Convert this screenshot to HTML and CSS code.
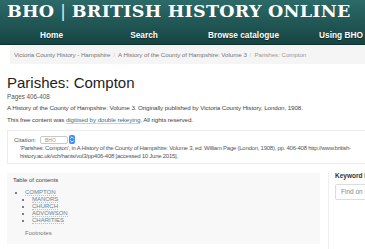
FILE: index.html
```html
<!DOCTYPE html>
<html lang="en">
<head>
  <meta charset="UTF-8" />
  <meta name="viewport" content="width=device-width, initial-scale=1.0"/>
  <title>Parishes: Compton | British History Online</title>
  <link rel="stylesheet" href="styles.css">
</head>
<body>
  <header class="site-header">
    <div class="brand">BHO <span class="brand-sep">|</span> BRITISH HISTORY ONLINE</div>
    <nav class="main-nav">
      <a href="#">Home</a>
      <a href="#">Search</a>
      <a href="#">Browse catalogue</a>
      <a href="#">Using BHO</a>
    </nav>
  </header>

  <div class="breadcrumb">
    <a href="#">Victoria County History - Hampshire</a>
    <span class="crumb-sep">/</span>
    <a href="#">A History of the County of Hampshire: Volume 3</a>
    <span class="crumb-sep">/</span>
    <span class="crumb-current">Parishes: Compton</span>
  </div>

  <main class="content">
    <h1 class="page-title">Parishes: Compton</h1>
    <p class="pages">Pages 406-408</p>
    <p class="source">A History of the County of Hampshire: Volume 3. Originally published by Victoria County History, London, 1908.</p>
    <p class="source">This free content was <a href="#" class="text-link">digitised by double rekeying</a>. All rights reserved.</p>

    <div class="citation">
      <div class="citation-row">
        <label for="cite-style">Citation:</label>
        <span class="select">
          <span class="select-value">BHO</span>
          <span class="select-arrows">
            <svg width="6" height="9" viewBox="0 0 6 9">
              <path d="M1.2 3.6 L3 1.8 L4.8 3.6 M1.2 5.4 L3 7.2 L4.8 5.4" fill="none" stroke="#fff" stroke-width="0.9"/>
            </svg>
          </span>
        </span>
      </div>
      <p class="citation-text">'Parishes: Compton', in A History of the County of Hampshire: Volume 3, ed. William Page (London, 1908), pp. 406-408 http://www.british-<wbr>history.ac.uk/vch/hants/vol3/pp406-408 [accessed 10 June 2015].</p>
    </div>

    <div class="lower">
      <div class="toc">
        <div class="toc-title">Table of contents</div>
        <ul class="toc-list">
          <li><a href="#">COMPTON</a>
            <ul>
              <li><a href="#">MANORS</a></li>
              <li><a href="#">CHURCH</a></li>
              <li><a href="#">ADVOWSON</a></li>
              <li><a href="#">CHARITIES</a></li>
            </ul>
          </li>
        </ul>
        <a href="#" class="footnotes">Footnotes</a>
      </div>
      <aside class="sidebar">
        <div class="sidebar-title">Keyword highlighting</div>
        <input class="find-input" type="text" placeholder="Find on this page">
      </aside>
    </div>
  </main>
</body>
</html>
```

FILE: styles.css
```css
body {
  margin: 0;
  font-family: "Liberation Sans", Arial, sans-serif;
  color: #333;
  background: #fff;
  overflow: hidden;
}
a {
  color: inherit;
  text-decoration: none;
}
p {
  margin: 0;
}
.site-header {
  height: 44px;
  background: linear-gradient(180deg, #2c6a68 0%, #1f5452 60%, #174442 100%);
  border-bottom: 1px solid #0f3231;
}
.brand {
  padding: 2px 0 0 7px;
  font-family: "DejaVu Serif", serif;
  font-weight: bold;
  font-size: 17.5px;
  line-height: 19px;
  letter-spacing: 0.25px;
  color: #fff;
  white-space: nowrap;
}
.brand-sep {
  font-weight: normal;
  font-family: "Liberation Sans", sans-serif;
  color: #d8e6e5;
}
.main-nav {
  display: grid;
  grid-template-columns: 103px 82px 117px 78px;
  justify-items: center;
  margin-top: 9px;
  font-size: 8.3px;
  font-weight: bold;
  color: #fff;
  white-space: nowrap;
  text-shadow: 0 1px 1px rgba(0, 0, 0, 0.5);
}
.breadcrumb {
  display: flex;
  gap: 3px;
  margin-left: 10px;
  padding: 6px 4px;
  background: #f5f5f5;
  font-size: 6.25px;
  line-height: 7px;
  letter-spacing: -0.08px;
  color: #777;
  white-space: nowrap;
}
.crumb-sep {
  color: #ccc;
}
.crumb-current {
  color: #999;
}
.content {
  padding: 0 0 0 7px;
  overflow: hidden;
}
.page-title {
  margin: 10px 0 0;
  font-size: 15px;
  line-height: 17px;
  font-weight: normal;
  color: #222;
}
.pages {
  margin-top: 2px;
  font-size: 6.3px;
  line-height: 8px;
  color: #555;
}
.source {
  margin-top: 2px;
  font-size: 6.25px;
  line-height: 9px;
  letter-spacing: -0.1px;
  color: #444;
  white-space: nowrap;
}
.source + .source {
  margin-top: 3px;
}
.text-link {
  color: #4c6b7f;
  border-bottom: 1px solid #c9d3da;
}
.citation {
  margin-top: 6px;
  padding: 4px 0 3px 6px;
  border: 1px solid #ececec;
  border-right: none;
}
.citation-row {
  display: flex;
  align-items: center;
  gap: 4px;
  height: 9px;
  font-size: 6px;
  color: #555;
}
.select {
  display: flex;
  align-items: center;
}
.select-value {
  width: 22px;
  height: 6px;
  padding-left: 4px;
  border: 1px solid #c8c8c8;
  border-radius: 2px;
  font-size: 5px;
  line-height: 6px;
  color: #999;
}
.select-arrows {
  display: flex;
  align-items: center;
  justify-content: center;
  width: 6px;
  height: 9px;
  margin-left: 1px;
  background: #3d8df0;
  border-radius: 2px;
}
.citation-text {
  margin: 0 0 0 6px;
  font-size: 6px;
  line-height: 8px;
  letter-spacing: -0.25px;
  color: #555;
}
.lower {
  display: flex;
  margin-top: 9px;
}
.toc {
  box-sizing: border-box;
  flex: none;
  width: 313px;
  height: 71px;
  padding: 4px 6px;
  background: #f8f8f8;
  font-size: 6px;
  line-height: 7px;
  color: #555;
}
.toc-title {
  color: #444;
}
.toc-list {
  margin: 5px 0 0;
  padding-left: 12px;
  list-style: disc;
}
.toc-list ul {
  margin: 0;
  padding-left: 7px;
  list-style: disc;
}
.toc-list li {
  margin: 0;
  line-height: 7px;
}
.toc-list a {
  color: #6a7f8e;
  border-bottom: 1px dotted #b8c4cc;
}
.footnotes {
  display: block;
  margin: 6px 0 0 12px;
  color: #777;
}
.sidebar {
  flex: 1;
  min-width: 0;
  margin-left: 8px;
  padding-left: 6px;
  border-left: 1px solid #eee;
  height: 76px;
  overflow: hidden;
}
.sidebar-title {
  margin-top: -2px;
  font-size: 6.5px;
  line-height: 9px;
  font-weight: bold;
  color: #333;
  white-space: nowrap;
}
.find-input {
  box-sizing: border-box;
  width: 90px;
  height: 16px;
  margin-top: 2px;
  padding: 0 5px;
  border: 1px solid #ddd;
  border-radius: 2px;
  font-family: inherit;
  font-size: 6.5px;
}
.find-input::placeholder {
  color: #888;
}
```
